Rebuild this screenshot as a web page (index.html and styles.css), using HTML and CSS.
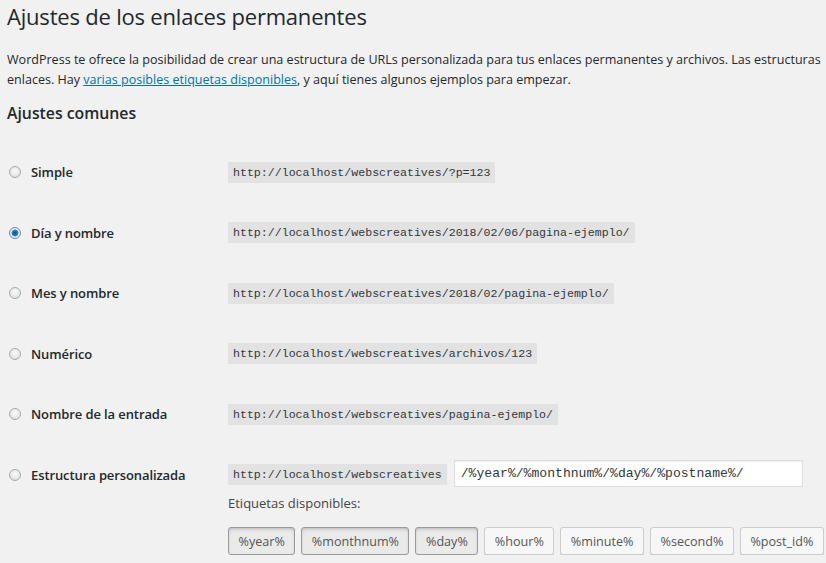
FILE: index.html
```html
<!DOCTYPE html>
<html lang="es">
<head>
  <meta charset="UTF-8">
  <meta name="viewport" content="width=device-width, initial-scale=1.0">
  <title>Ajustes de los enlaces permanentes</title>
  <link rel="stylesheet" href="styles.css">
</head>
<body>
  <div class="wrap">
    <h1>Ajustes de los enlaces permanentes</h1>

    <p class="intro">WordPress te ofrece la posibilidad de crear una estructura de URLs personalizada para tus enlaces permanentes y archivos. Las estructuras<br>enlaces. Hay <a href="#">varias posibles etiquetas disponibles</a>, y aquí tienes algunos ejemplos para empezar.</p>

    <h2>Ajustes comunes</h2>

    <form class="permalinks">
      <div class="row">
        <label class="choice"><input type="radio" name="structure"> Simple</label>
        <div class="value"><code>http://localhost/webscreatives/?p=123</code></div>
      </div>

      <div class="row">
        <label class="choice"><input type="radio" name="structure" checked> Día y nombre</label>
        <div class="value"><code>http://localhost/webscreatives/2018/02/06/pagina-ejemplo/</code></div>
      </div>

      <div class="row">
        <label class="choice"><input type="radio" name="structure"> Mes y nombre</label>
        <div class="value"><code>http://localhost/webscreatives/2018/02/pagina-ejemplo/</code></div>
      </div>

      <div class="row">
        <label class="choice"><input type="radio" name="structure"> Numérico</label>
        <div class="value"><code>http://localhost/webscreatives/archivos/123</code></div>
      </div>

      <div class="row">
        <label class="choice"><input type="radio" name="structure"> Nombre de la entrada</label>
        <div class="value"><code>http://localhost/webscreatives/pagina-ejemplo/</code></div>
      </div>

      <div class="row custom">
        <label class="choice"><input type="radio" name="structure"> Estructura personalizada</label>
        <div class="value">
          <div class="custom-line">
            <code>http://localhost/webscreatives</code>
            <input type="text" class="structure-input" value="/%year%/%monthnum%/%day%/%postname%/">
          </div>
          <p class="tags-label">Etiquetas disponibles:</p>
          <div class="tags">
            <button type="button" class="tag active">%year%</button>
            <button type="button" class="tag active">%monthnum%</button>
            <button type="button" class="tag active">%day%</button>
            <button type="button" class="tag">%hour%</button>
            <button type="button" class="tag">%minute%</button>
            <button type="button" class="tag">%second%</button>
            <button type="button" class="tag">%post_id%</button>
          </div>
        </div>
      </div>
    </form>
  </div>
</body>
</html>
```

FILE: styles.css
```css
html, body {
  margin: 0;
  padding: 0;
  overflow: hidden;
}

body {
  background-color: #f1f1f1;
  color: #23282d;
  font-family: 'Open Sans', sans-serif;
  font-size: 13px;
}

.wrap {
  padding: 0 0 0 7px;
}

h1 {
  font-size: 22px;
  font-weight: 400;
  line-height: 29px;
  margin: 2px 0 0;
  letter-spacing: -0.2px;
}

.intro {
  margin: 19px 0 0;
  line-height: 19.5px;
  font-size: 12.55px;
  white-space: nowrap;
}

.intro a {
  color: #0073aa;
}

h2 {
  font-size: 15.8px;
  font-weight: 600;
  margin: 13px 0 0;
  line-height: 22px;
}

.permalinks {
  margin-top: 18px;
}

.row {
  display: flex;
  align-items: center;
  height: 60.5px;
}

.choice {
  width: 221px;
  display: flex;
  align-items: center;
  font-size: 13px;
  font-weight: 600;
  letter-spacing: -0.1px;
}

.choice input {
  appearance: none;
  -webkit-appearance: none;
  width: 12px;
  height: 12px;
  margin: 0 10px 0 2px;
  border: 1px solid #a9a9a9;
  border-radius: 50%;
  background: radial-gradient(circle at 50% 40%, #fafafa 0, #e4e4e4 70%, #d6d6d6 100%);
  box-sizing: border-box;
}

.choice input:checked {
  border-color: #6c8aa6;
  background: radial-gradient(circle, #0e4f7a 0, #1f7fb8 2.5px, #4c8db8 3.2px, #e8eef3 3.8px, #dfe6ec 100%);
}

code {
  font-family: 'Liberation Mono', monospace;
  font-size: 11.6px;
  background-color: #e2e2e2;
  color: #32373c;
  padding: 3px 5px;
  line-height: 15px;
  display: inline-block;
}

.row.custom {
  height: auto;
  align-items: flex-start;
  padding-top: 15.5px;
}

.row.custom .choice {
  height: 27px;
  margin-top: 1px;
}

.custom-line {
  display: flex;
  align-items: center;
  gap: 7px;
}

.custom-line code {
  margin-top: 2px;
}

.structure-input {
  width: 349px;
  height: 27px;
  box-sizing: border-box;
  border: 1px solid #dddddd;
  background: #fff;
  font-family: 'Liberation Mono', monospace;
  font-size: 13.1px;
  color: #32373c;
  padding: 0 6px;
  margin: 0;
  box-shadow: inset 0 1px 2px rgba(0, 0, 0, 0.07);
}

.tags-label {
  margin: 7px 0 0;
  line-height: 18px;
  color: #444;
}

.tags {
  display: flex;
  gap: 6px;
  margin-top: 15px;
}

.tag {
  font-family: 'Open Sans', sans-serif;
  font-size: 12.6px;
  color: #555;
  height: 28px;
  padding: 0 9.5px;
  border: 1px solid #cccccc;
  border-radius: 3px;
  background: #f7f7f7;
  box-shadow: 0 1px 0 #cccccc;
  white-space: nowrap;
}

.tag.active {
  background: #eaeaea;
  border-color: #9a9a9a;
  box-shadow: inset 0 2px 5px -3px rgba(0, 0, 0, 0.5);
}
```
